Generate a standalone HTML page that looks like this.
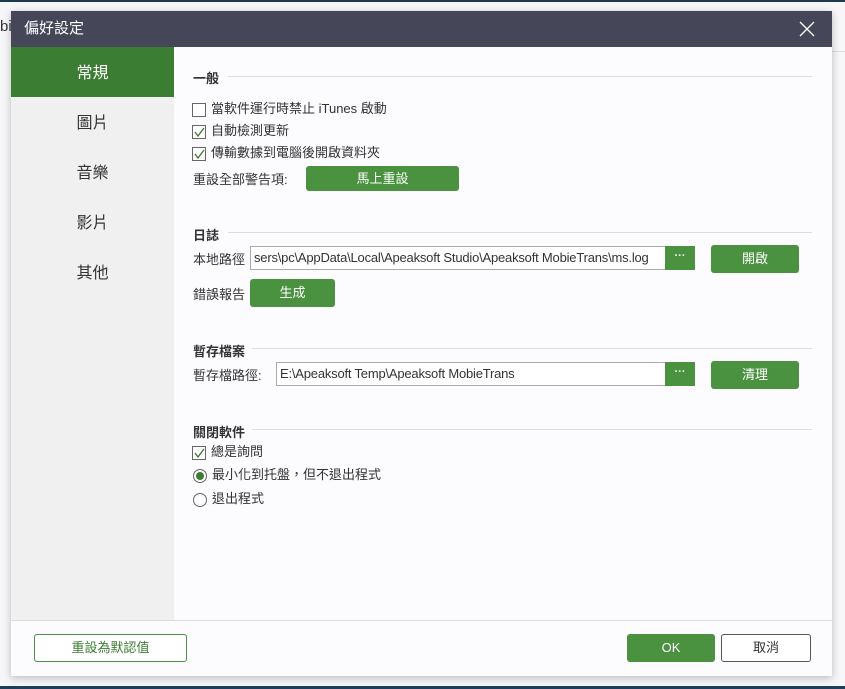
<!DOCTYPE html>
<html><head><meta charset="utf-8"><style>
*{box-sizing:border-box;margin:0;padding:0}
body{width:845px;height:689px;overflow:hidden;background:#f7f7f9;position:relative;font-family:"Liberation Sans","Noto Sans CJK TC",sans-serif;font-size:13px;color:#333}
.abs{position:absolute}
.top{left:0;top:0;width:845px;height:2px;background:#1c3a4c}
.bottom{left:0;top:686px;width:845px;height:3px;background:#1d3e5c}
.dlg{left:11px;top:11px;width:821px;height:665px;background:#fcfbfd;box-shadow:0 2px 8px rgba(0,0,0,.25)}
.title{left:0;top:0;width:821px;height:36px;background:#454759;color:#fff;font-size:15px;line-height:36px;padding-left:13px}
.side{left:0;top:36px;width:163px;height:573px;background:#f0f0f0}
.side div{height:50px;line-height:54px;text-align:center;font-size:16px;color:#333}
.side .sel{background:#3b7d32;color:#fff}
.sec{font-weight:bold;font-size:13px;color:#333}
.line{height:1px;background:#dedede}
.cb{width:14px;height:14px;border:1px solid #666;background:#fff;display:inline-block;vertical-align:middle;margin-right:5px;position:relative}
.row{font-size:13px;line-height:20px}
.btn{background:#4a9140;color:#fff;text-align:center;border-radius:3px;font-size:13px}
.inp{border:1px solid #aaa;background:#fff;font-size:13px;line-height:22px;padding-left:3px;overflow:hidden;white-space:nowrap;color:#333;letter-spacing:-0.2px}
.dots{background:#4a9140;color:#fff;text-align:center;font-weight:bold;font-size:11px;line-height:20px}
</style></head><body>
<div class="abs top"></div>
<div class="abs" style="left:0;top:18px;font-size:15px">bi</div>
<div class="abs" style="left:832px;top:51px;width:13px;height:1px;background:#ddd"></div>
<div class="abs dlg">
 <div class="abs title">偏好設定</div>
 <svg class="abs" style="left:788px;top:10px" width="16" height="16"><path d="M1 1L15 15M15 1L1 15" stroke="#fff" stroke-width="1.3"/></svg>
 <div class="abs side"><div class="sel">常規</div><div>圖片</div><div>音樂</div><div>影片</div><div>其他</div></div>
 <div class="abs sec" style="left:182px;top:57px">一般</div>
 <div class="abs line" style="left:217px;top:65px;width:584px"></div>
 <div class="abs row" style="left:181px;top:88px"><span class="cb"></span>當軟件運行時禁止 iTunes 啟動</div>
 <div class="abs row" style="left:181px;top:110px"><span class="cb"><svg class="abs" style="left:1px;top:1px" width="11" height="11"><path d="M1 5L4 9L10 1" stroke="#3b7d32" stroke-width="1.4" fill="none"/></svg></span>自動檢測更新</div>
 <div class="abs row" style="left:181px;top:132px"><span class="cb"><svg class="abs" style="left:1px;top:1px" width="11" height="11"><path d="M1 5L4 9L10 1" stroke="#3b7d32" stroke-width="1.4" fill="none"/></svg></span>傳輸數據到電腦後開啟資料夾</div>
 <div class="abs row" style="left:182px;top:159px">重設全部警告項:</div>
 <div class="abs btn" style="left:295px;top:155px;width:153px;height:25px;line-height:25px">馬上重設</div>

 <div class="abs sec" style="left:182px;top:214px">日誌</div>
 <div class="abs line" style="left:217px;top:221px;width:584px"></div>
 <div class="abs row" style="left:182px;top:239px">本地路徑</div>
 <div class="abs inp" style="left:239px;top:235px;width:416px;height:24px;border-right:none">sers\pc\AppData\Local\Apeaksoft Studio\Apeaksoft MobieTrans\ms.log</div>
 <div class="abs dots" style="left:654px;top:235px;width:30px;height:24px">···</div>
 <div class="abs btn" style="left:700px;top:234px;width:88px;height:28px;line-height:28px">開啟</div>
 <div class="abs row" style="left:182px;top:274px">錯誤報告</div>
 <div class="abs btn" style="left:239px;top:268px;width:85px;height:28px;line-height:28px">生成</div>

 <div class="abs sec" style="left:182px;top:330px">暫存檔案</div>
 <div class="abs line" style="left:241px;top:337px;width:560px"></div>
 <div class="abs row" style="left:182px;top:355px">暫存檔路徑:</div>
 <div class="abs inp" style="left:265px;top:351px;width:390px;height:24px;border-right:none">E:\Apeaksoft Temp\Apeaksoft MobieTrans</div>
 <div class="abs dots" style="left:654px;top:351px;width:30px;height:24px">···</div>
 <div class="abs btn" style="left:700px;top:350px;width:88px;height:28px;line-height:28px">清理</div>

 <div class="abs sec" style="left:182px;top:411px">關閉軟件</div>
 <div class="abs line" style="left:241px;top:418px;width:560px"></div>
 <div class="abs row" style="left:181px;top:431px"><span class="cb"><svg class="abs" style="left:1px;top:1px" width="11" height="11"><path d="M1 5L4 9L10 1" stroke="#3b7d32" stroke-width="1.4" fill="none"/></svg></span>總是詢問</div>
 <div class="abs row" style="left:182px;top:454px"><span class="cb" style="border-radius:50%;"><span class="abs" style="left:2px;top:2px;width:8px;height:8px;border-radius:50%;background:#3b7d32"></span></span>最小化到托盤，但不退出程式</div>
 <div class="abs row" style="left:182px;top:478px"><span class="cb" style="border-radius:50%"></span>退出程式</div>

 <div class="abs line" style="left:0;top:609px;width:821px;background:#ddd"></div>
 <div class="abs" style="left:23px;top:623px;width:153px;height:28px;border:1px solid #4a9140;border-radius:3px;color:#3b7d32;text-align:center;line-height:26px;background:#fff">重設為默認值</div>
 <div class="abs btn" style="left:616px;top:623px;width:88px;height:28px;line-height:28px">OK</div>
 <div class="abs" style="left:710px;top:623px;width:90px;height:28px;border:1px solid #555;border-radius:3px;text-align:center;line-height:26px;background:#fff">取消</div>
</div>
<div class="abs bottom"></div>
</body></html>
